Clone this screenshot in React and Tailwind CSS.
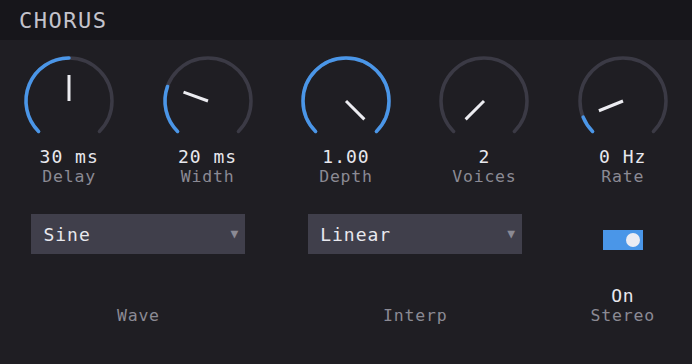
import React from "react";

const mono = { fontFamily: '"DejaVu Sans Mono", "Liberation Mono", monospace' };

const knobs = [
  { value: 0.5, text: "30 ms", label: "Delay" },
  { value: 0.24, text: "20 ms", label: "Width" },
  { value: 1, text: "1.00", label: "Depth" },
  { value: 0, text: "2", label: "Voices" },
  { value: 0.085, text: "0 Hz", label: "Rate" },
];

function point(cx, cy, r, deg) {
  const a = (deg * Math.PI) / 180;
  return [cx + r * Math.sin(a), cy - r * Math.cos(a)];
}

function arc(cx, cy, r, from, to) {
  const [x1, y1] = point(cx, cy, r, from);
  const [x2, y2] = point(cx, cy, r, to);
  const large = to - from > 180 ? 1 : 0;
  return `M ${x1} ${y1} A ${r} ${r} 0 ${large} 1 ${x2} ${y2}`;
}

function Knob({ value, text, label }) {
  const cx = 48;
  const cy = 48;
  const r = 43;
  const angle = -135 + value * 270;
  const [px, py] = point(cx, cy, 26, angle);

  return (
    <div className="flex flex-col items-center">
      <svg width="96" height="84" viewBox="0 0 96 84">
        <path
          d={arc(cx, cy, r, -135, 135)}
          fill="none"
          stroke="#3b3a45"
          strokeWidth="3.5"
          strokeLinecap="round"
        />
        {value > 0.01 && (
          <path
            d={arc(cx, cy, r, -135, angle)}
            fill="none"
            stroke="#4a96e8"
            strokeWidth="3.5"
            strokeLinecap="round"
          />
        )}
        <line
          x1={cx}
          y1={cy}
          x2={px}
          y2={py}
          stroke="#ececf1"
          strokeWidth="3"
        />
      </svg>
      <div className="mt-[10px] text-[18px] leading-5 tracking-[1px] text-[#e8e8ee]">
        {text}
      </div>
      <div className="text-[16.5px] leading-5 tracking-[0.8px] text-[#8b8a94]">
        {label}
      </div>
    </div>
  );
}

function Select({ value }) {
  return (
    <div className="flex h-10 w-[214px] items-center justify-between bg-[#403f4b] pl-3 pr-[7px]">
      <span className="text-[18px] tracking-[1px] text-[#e8e8ee]">{value}</span>
      <span className="text-[13px] text-[#8b8a94]">▼</span>
    </div>
  );
}

export default function App() {
  return (
    <div className="h-[364px] w-[692px] bg-[#1f1e23]" style={mono}>
      <div className="flex h-10 items-center bg-[#17161b] pl-[19px]">
        <h1 className="text-[22px] tracking-[1.5px] text-[#c4c3cc]">CHORUS</h1>
      </div>

      <div className="grid grid-cols-5 pt-[13px]">
        {knobs.map((k) => (
          <Knob key={k.label} {...k} />
        ))}
      </div>

      <div className="mt-[27px] grid grid-cols-5 items-center">
        <div className="col-span-2 flex justify-center">
          <Select value="Sine" />
        </div>
        <div className="col-span-2 flex justify-center">
          <Select value="Linear" />
        </div>
        <div className="mt-3 flex justify-center">
          <div className="flex h-5 w-10 items-center justify-end bg-[#4a96e8] pr-[3px]">
            <div className="h-[14px] w-[14px] rounded-full bg-[#ececf3]" />
          </div>
        </div>
      </div>

      <div className="mt-8 grid grid-cols-5 items-end text-[16.5px] leading-5 tracking-[0.8px] text-[#8b8a94]">
        <div className="col-span-2 text-center">Wave</div>
        <div className="col-span-2 text-center">Interp</div>
        <div className="flex flex-col items-center">
          <span className="text-[18px] text-[#e8e8ee]">On</span>
          <span>Stereo</span>
        </div>
      </div>
    </div>
  );
}
